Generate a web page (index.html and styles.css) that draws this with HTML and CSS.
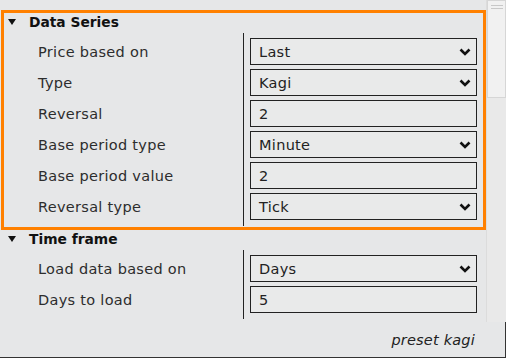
FILE: index.html
```html
<!DOCTYPE html>
<html>
<head>
<meta charset="utf-8">
<link rel="stylesheet" href="styles.css">
</head>
<body>
<div class="frame">
  <div class="top">
    <div class="content">
      <section class="section active">
        <div class="head"><span class="tri"></span><span class="title">Data Series</span></div>
        <div class="grid">
          <div class="labels">
            <div class="lab">Price based on</div>
            <div class="lab">Type</div>
            <div class="lab">Reversal</div>
            <div class="lab">Base period type</div>
            <div class="lab">Base period value</div>
            <div class="lab">Reversal type</div>
          </div>
          <div class="values">
            <div class="box sel"><span>Last</span><svg class="chev" viewBox="0 0 12 8"><polyline points="1.5,1.5 6,6 10.5,1.5"/></svg></div>
            <div class="box sel"><span>Kagi</span><svg class="chev" viewBox="0 0 12 8"><polyline points="1.5,1.5 6,6 10.5,1.5"/></svg></div>
            <div class="box"><span>2</span></div>
            <div class="box sel"><span>Minute</span><svg class="chev" viewBox="0 0 12 8"><polyline points="1.5,1.5 6,6 10.5,1.5"/></svg></div>
            <div class="box"><span>2</span></div>
            <div class="box sel"><span>Tick</span><svg class="chev" viewBox="0 0 12 8"><polyline points="1.5,1.5 6,6 10.5,1.5"/></svg></div>
          </div>
        </div>
      </section>
      <section class="section plain">
        <div class="head"><span class="tri"></span><span class="title">Time frame</span></div>
        <div class="grid">
          <div class="labels">
            <div class="lab">Load data based on</div>
            <div class="lab">Days to load</div>
          </div>
          <div class="values">
            <div class="box sel"><span>Days</span><svg class="chev" viewBox="0 0 12 8"><polyline points="1.5,1.5 6,6 10.5,1.5"/></svg></div>
            <div class="box"><span>5</span></div>
          </div>
        </div>
      </section>
    </div>
    <div class="scrollbar"><div class="thumb"><span class="grip"></span><span class="grip"></span></div></div>
  </div>
  <div class="footer"><span class="preset">preset kagi</span></div>
</div>
</body>
</html>
```
FILE: styles.css
```css
html, body {
  margin: 0;
  padding: 0;
  background: #e6e7e8;
}
body {
  font-family: "DejaVu Sans", "Noto Sans", sans-serif;
  color: #222;
  width: 506px;
  height: 358px;
  overflow: hidden;
}
.frame {
  width: 506px;
  height: 358px;
  display: flex;
  flex-direction: column;
  box-sizing: border-box;
}
.top {
  display: flex;
  height: 322px;
}
.content {
  width: 486px;
  padding-top: 10px;
  box-sizing: border-box;
}
.section {
  margin-left: 1px;
  width: 485px;
  box-sizing: border-box;
  border: 3px solid transparent;
  padding-bottom: 1px;
}
.section.active {
  border-color: #ff8000;
}
.section.plain {
  border-top-width: 0;
}
.head {
  height: 17px;
  display: flex;
  align-items: center;
}
.tri {
  width: 0;
  height: 0;
  margin-left: 4px;
  border-left: 4.5px solid transparent;
  border-right: 4.5px solid transparent;
  border-top: 6px solid #111;
  margin-top: 1px;
}
.title {
  margin-left: 13px;
  font-weight: bold;
  font-size: 13.8px;
  color: #111;
}
.grid {
  display: flex;
  margin-top: 3px;
}
.labels {
  width: 239px;
  padding-top: 5px;
  display: flex;
  flex-direction: column;
  gap: 4px;
}
.lab {
  height: 27px;
  display: flex;
  align-items: center;
  padding-left: 34px;
  font-size: 14.5px;
  letter-spacing: 0.3px;
  color: #2d2d2d;
}
.values {
  flex: 1;
  border-left: 1px solid #222;
  padding: 5px 6px 6px 6px;
  display: flex;
  flex-direction: column;
  gap: 4px;
}
.box {
  height: 27px;
  box-sizing: border-box;
  border: 1px solid #222;
  background: #e9eaea;
  display: flex;
  align-items: center;
  justify-content: space-between;
  padding: 0 5px 0 8px;
  font-size: 14.5px;
  letter-spacing: 0.3px;
  color: #222;
}
.chev {
  width: 12px;
  height: 8px;
  fill: none;
  stroke: #111;
  stroke-width: 2.6;
}
.scrollbar {
  width: 20px;
  background: #e9e9e9;
  border-left: 1px solid #dcdcdc;
  box-sizing: border-box;
}
.thumb {
  height: 98px;
  background: #f1f1f1;
  border: 1px solid #d6d6d6;
  box-sizing: border-box;
  display: flex;
  flex-direction: column;
  align-items: center;
  padding-top: 4px;
  gap: 2px;
}
.grip {
  width: 12px;
  height: 1px;
  background: #c8c8c8;
}
.footer {
  flex: 1;
  display: flex;
  justify-content: flex-end;
  align-items: center;
  border-bottom: 1px solid #333;
  border-right: 1px solid #333;
  padding-right: 30px;
}
.preset {
  font-style: italic;
  font-size: 14.5px;
  letter-spacing: 0.2px;
  color: #222;
}
```
